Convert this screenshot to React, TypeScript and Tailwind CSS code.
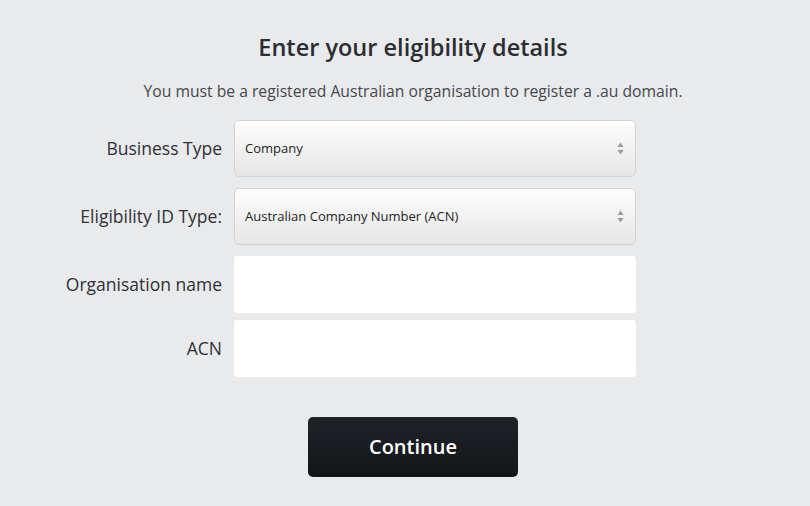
import React from "react";

function SelectArrows() {
  return (
    <svg width="7" height="13" viewBox="0 0 7 13" className="shrink-0">
      <path d="M3.5 0.5 L6.5 5 L0.5 5 Z" fill="#9a9a9a" />
      <path d="M0.5 8 L6.5 8 L3.5 12.5 Z" fill="#9a9a9a" />
    </svg>
  );
}

function FakeSelect({ value }: { value: string }) {
  return (
    <div className="flex h-[57px] w-[402px] items-center justify-between rounded-[5px] border border-[#d3d4d6] bg-gradient-to-b from-[#fdfdfd] to-[#e6e6e6] pl-[10px] pr-[11px]">
      <span className="text-[13px] text-[#1f2328]">{value}</span>
      <SelectArrows />
    </div>
  );
}

function FormRow({
  label,
  children,
  className = "",
}: {
  label: string;
  children: React.ReactNode;
  className?: string;
}) {
  return (
    <div className={`flex items-center gap-[12px] ${className}`}>
      <label className="w-[190px] text-right text-[17.5px] text-[#2f3136]">
        {label}
      </label>
      {children}
    </div>
  );
}

export default function App() {
  return (
    <div
      className="min-h-[506px] w-full bg-[#e9eaec] pt-[32px]"
      style={{ fontFamily: "'Open Sans', Lato, sans-serif" }}
    >
      <div className="pl-[16px] text-center">
        <h1 className="text-[23.5px] font-semibold leading-[30px] text-[#2b2d31]">
          Enter your eligibility details
        </h1>
        <p className="mt-[19px] text-[15.7px] leading-[21px] text-[#45484d]">
          You must be a registered Australian organisation to register a .au
          domain.
        </p>
      </div>

      <div className="ml-[32px] mt-[18px] w-[604px]">
        <FormRow label="Business Type">
          <FakeSelect value="Company" />
        </FormRow>
        <FormRow label="Eligibility ID Type:" className="mt-[11px]">
          <FakeSelect value="Australian Company Number (ACN)" />
        </FormRow>
        <FormRow label="Organisation name" className="mt-[11px]">
          <input
            type="text"
            className="h-[57px] w-[402px] rounded-[3px] bg-white px-3 outline-none"
          />
        </FormRow>
        <FormRow label="ACN" className="mt-[7px]">
          <input
            type="text"
            className="h-[57px] w-[402px] rounded-[3px] bg-white px-3 outline-none"
          />
        </FormRow>
      </div>

      <div className="mt-[40px] flex justify-center pl-[16px]">
        <button className="h-[60px] w-[210px] rounded-[5px] bg-gradient-to-b from-[#1f2328] to-[#121518] text-[20px] font-semibold text-white">
          Continue
        </button>
      </div>
    </div>
  );
}
